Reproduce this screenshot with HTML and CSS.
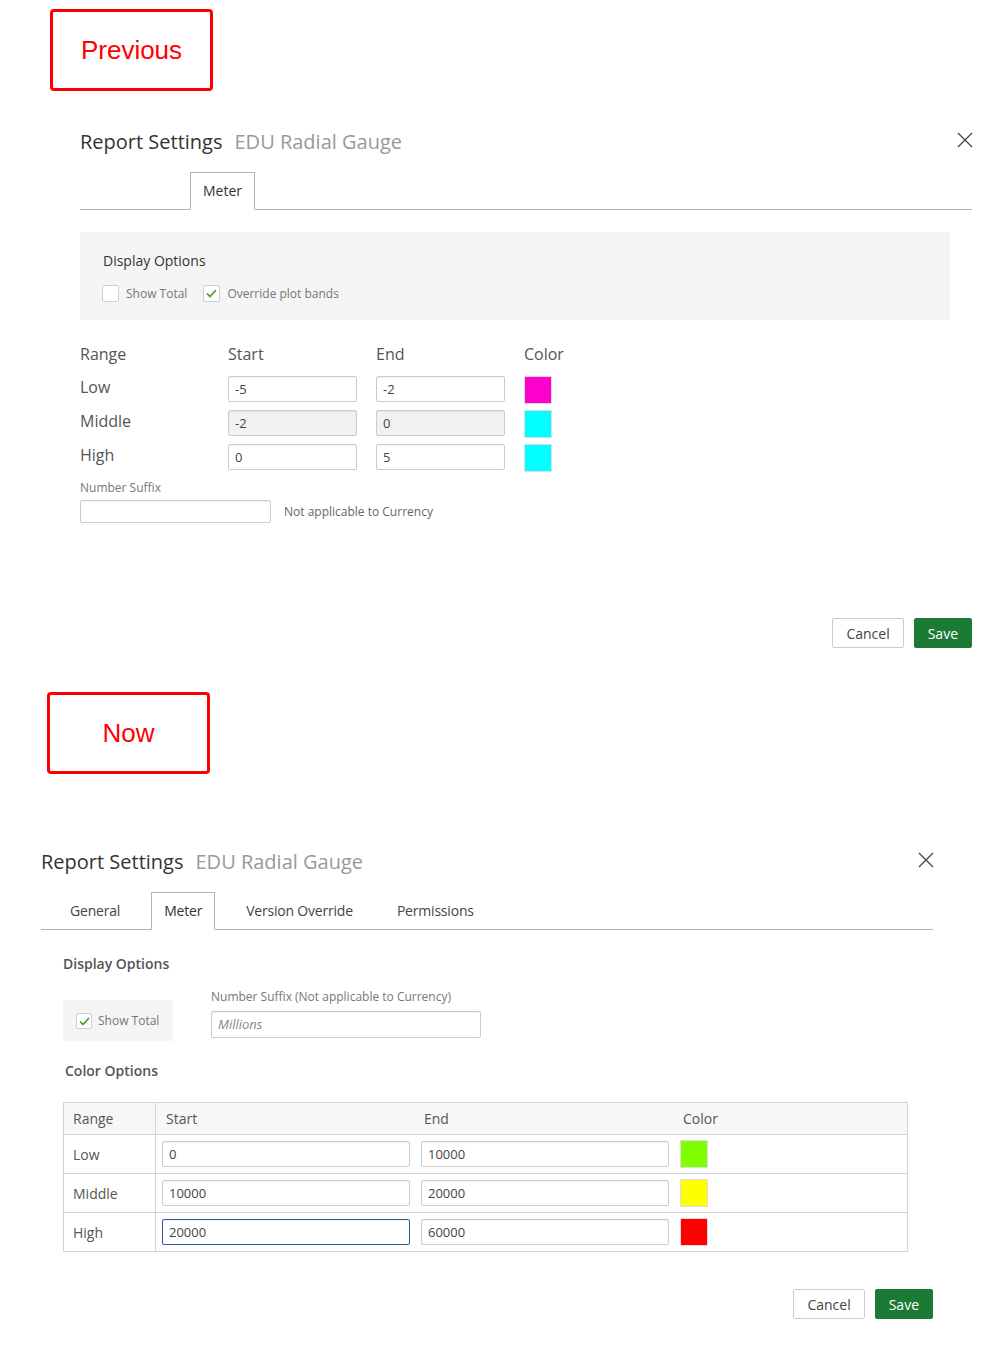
FILE: index.html
```html
<!DOCTYPE html>
<html lang="en">
<head>
<meta charset="utf-8">
<title>Report Settings</title>
<link rel="stylesheet" href="styles.css">
</head>
<body>
<section class="compare">
  <div class="tag tag-prev">Previous</div>
  <div class="dialog dialog-prev">
    <header class="dlg-head">
      <h2 class="title"><span class="title-main">Report Settings</span><span class="title-sub">EDU Radial Gauge</span></h2>
      <span class="close" aria-label="Close"><svg width="16" height="16" viewBox="0 0 16 16"><path d="M1 1L15 15M15 1L1 15" stroke="#444" stroke-width="1.3" fill="none"/></svg></span>
    </header>
    <nav class="tabs tabs-prev">
      <div class="tab active">Meter</div>
    </nav>
    <div class="panel">
      <div class="panel-title">Display Options</div>
      <div class="check-row">
        <label class="check"><span class="box"></span><span>Show Total</span></label>
        <label class="check"><span class="box"><svg width="15" height="15" viewBox="0 0 15 15"><path d="M3 7.5L6 10.5L12 4" stroke="#4f9a2b" stroke-width="1.7" fill="none"/></svg></span><span>Override plot bands</span></label>
      </div>
    </div>
    <div class="range-grid">
      <div class="rg-head">Range</div><div class="rg-head">Start</div><div class="rg-head">End</div><div class="rg-head">Color</div>
      <div class="rg-label">Low</div><div class="field">-5</div><div class="field">-2</div><div class="swatch sw-magenta"></div>
      <div class="rg-label">Middle</div><div class="field disabled">-2</div><div class="field disabled">0</div><div class="swatch sw-cyan"></div>
      <div class="rg-label">High</div><div class="field">0</div><div class="field">5</div><div class="swatch sw-cyan"></div>
    </div>
    <div class="small-label suffix-label">Number Suffix</div>
    <div class="suffix-row">
      <div class="field suffix-field"></div>
      <span class="small-note">Not applicable to Currency</span>
    </div>
    <div class="actions actions-prev">
      <button class="btn btn-cancel">Cancel</button>
      <button class="btn btn-save">Save</button>
    </div>
  </div>
</section>

<section class="compare">
  <div class="tag tag-now">Now</div>
  <div class="dialog dialog-now">
    <header class="dlg-head">
      <h2 class="title"><span class="title-main">Report Settings</span><span class="title-sub">EDU Radial Gauge</span></h2>
      <span class="close" aria-label="Close"><svg width="16" height="16" viewBox="0 0 16 16"><path d="M1 1L15 15M15 1L1 15" stroke="#444" stroke-width="1.3" fill="none"/></svg></span>
    </header>
    <nav class="tabs tabs-now">
      <div class="tab">General</div>
      <div class="tab active">Meter</div>
      <div class="tab">Version Override</div>
      <div class="tab">Permissions</div>
    </nav>
    <div class="body-now">
      <div class="section-title">Display Options</div>
      <div class="options-row">
        <div class="total-panel">
          <label class="check"><span class="box"><svg width="15" height="15" viewBox="0 0 15 15"><path d="M3 7.5L6 10.5L12 4" stroke="#4f9a2b" stroke-width="1.7" fill="none"/></svg></span><span>Show Total</span></label>
        </div>
        <div class="suffix-block">
          <div class="small-label">Number Suffix (Not applicable to Currency)</div>
          <div class="field suffix-now placeholder">Millions</div>
        </div>
      </div>
      <div class="section-title color-title">Color Options</div>
      <div class="ctable">
        <div class="ct-head ct-first">Range</div><div class="ct-head">Start</div><div class="ct-head">End</div><div class="ct-head">Color</div>
        <div class="ct-cell ct-first">Low</div><div class="ct-cell ct-in ct-in2"><div class="field">0</div></div><div class="ct-cell ct-in"><div class="field">10000</div></div><div class="ct-cell ct-sw"><div class="swatch sw-green"></div></div>
        <div class="ct-cell ct-first">Middle</div><div class="ct-cell ct-in ct-in2"><div class="field">10000</div></div><div class="ct-cell ct-in"><div class="field">20000</div></div><div class="ct-cell ct-sw"><div class="swatch sw-yellow"></div></div>
        <div class="ct-cell ct-first ct-last">High</div><div class="ct-cell ct-in ct-in2 ct-last"><div class="field focus">20000</div></div><div class="ct-cell ct-in ct-last"><div class="field">60000</div></div><div class="ct-cell ct-sw ct-last"><div class="swatch sw-red"></div></div>
      </div>
    </div>
    <div class="actions actions-now">
      <button class="btn btn-cancel">Cancel</button>
      <button class="btn btn-save">Save</button>
    </div>
  </div>
</section>
</body>
</html>
```

FILE: styles.css
```css
* { box-sizing: border-box; }
html, body { margin: 0; padding: 0; background: #fff; }
body {
  font-family: "Open Sans", "Liberation Sans", sans-serif;
  color: #333;
  width: 1006px;
  min-height: 1358px;
}

.tag {
  width: 163px;
  height: 82px;
  border: 3px solid #ff0000;
  border-radius: 4px;
  display: flex;
  align-items: center;
  justify-content: center;
  font-family: "Liberation Sans", Arial, sans-serif;
  font-size: 26px;
  color: #ff0000;
}
.tag-prev { margin: 9px 0 0 50px; }
.tag-now { margin: 44px 0 0 47px; }

.dialog { width: 892px; }
.dialog-prev { margin: 37px 0 0 80px; }
.dialog-now { margin: 74px 0 0 41px; }

.dlg-head {
  display: flex;
  justify-content: space-between;
  align-items: center;
  height: 28px;
}
.title {
  margin: 0;
  font-size: 20px;
  font-weight: 400;
  line-height: 28px;
  display: flex;
  gap: 12px;
}
.title-main { color: #333; }
.title-sub { color: #999; }
.close { display: block; width: 16px; height: 16px; margin-top: -4px; margin-right: -1px; }
.close svg { display: block; }

.tabs {
  display: flex;
  margin-top: 16px;
  border-bottom: 1px solid #a7b5c7;
}
.tabs-prev { padding-left: 110px; }
.tabs-now { padding-left: 16px; gap: 18px; }
.tab {
  font-size: 14px;
  line-height: 20px;
  padding: 8px 12px 8px;
  border: 1px solid transparent;
  margin-bottom: -1px;
  color: #444;
}
.tabs-now .tab { letter-spacing: -0.2px; }
.tab.active {
  border-color: #a7b5c7;
  border-bottom-color: #fff;
  background: #fff;
  color: #333;
}

.panel {
  margin-top: 22px;
  width: 870px;
  background: #f5f5f5;
  padding: 19px 22px 18px;
}
.panel-title { font-size: 14px; line-height: 20px; color: #333; padding-left: 1px; }
.check-row { display: flex; gap: 16px; margin-top: 14px; height: 17px; }
.check {
  display: flex;
  align-items: center;
  gap: 7px;
  font-size: 12px;
  color: #777;
  line-height: 17px;
}
.box {
  width: 17px;
  height: 17px;
  border: 1px solid #cfcfcf;
  border-radius: 2px;
  background: #fff;
  display: block;
}
.box svg { display: block; margin: 0; }

.range-grid {
  margin-top: 24px;
  display: grid;
  grid-template-columns: 148px 148px 148px 60px;
  grid-auto-rows: auto;
  row-gap: 6px;
  align-items: start;
}
.rg-head { font-size: 16px; line-height: 20px; color: #555; margin-bottom: 6px; }
.rg-label { font-size: 16px; line-height: 22px; color: #555; }

.field {
  width: 129px;
  height: 26px;
  border: 1px solid #cccccc;
  border-radius: 2px;
  background: #fff;
  box-shadow: inset 0 1px 1px rgba(0,0,0,0.06);
  font-size: 13px;
  line-height: 24px;
  padding: 0 6px;
  color: #444;
}
.field.disabled { background: #f1f1f1; }
.swatch {
  width: 28px;
  height: 28px;
  border: 1px solid #dddddd;
}
.sw-magenta { background: #ff00cc; }
.sw-cyan { background: #00ffff; }
.sw-green { background: #80ff00; }
.sw-yellow { background: #ffff00; }
.sw-red { background: #ff0000; }

.small-label { font-size: 12px; line-height: 16px; color: #777; }
.suffix-label { margin-top: 8px; }
.suffix-row { display: flex; align-items: center; margin-top: 4px; gap: 13px; }
.suffix-field { width: 191px; height: 23px; }
.small-note { font-size: 12px; color: #666; }

.actions { display: flex; justify-content: flex-end; gap: 10px; }
.actions-prev { margin-top: 95px; }
.actions-now { margin-top: 37px; }
.btn {
  font-family: "Open Sans", "Liberation Sans", sans-serif;
  font-size: 14px;
  height: 30px;
  padding: 0 13px;
  border-radius: 2px;
  cursor: pointer;
}
.btn-cancel { background: #fff; border: 1px solid #cccccc; color: #444; }
.btn-save { background: #1b7a33; border: 1px solid #1b7a33; color: #fff; padding: 0 13px; }

.body-now { padding-left: 22px; }
.section-title {
  margin-top: 24px;
  font-size: 14px;
  line-height: 20px;
  font-weight: 600;
  color: #555;
}
.options-row { display: flex; gap: 38px; margin-top: 15px; align-items: flex-start; }
.total-panel {
  margin-top: 11px;
  width: 110px;
  height: 41px;
  background: #f5f5f5;
  padding: 0 13px;
  display: flex;
  align-items: center;
}
.total-panel .check { gap: 6px; }
.total-panel .box { width: 16px; height: 16px; }
.suffix-now {
  margin-top: 6px;
  width: 270px;
  height: 27px;
  line-height: 25px;
  font-style: italic;
  color: #888;
  font-size: 13px;
}
.color-title { margin-top: 20px; margin-left: 2px; }

.ctable {
  margin-top: 21px;
  width: 845px;
  border: 1px solid #d4d4d4;
  display: grid;
  grid-template-columns: 92px 258px 259px 1fr;
}
.ct-head {
  height: 32px;
  background: #f7f7f7;
  border-bottom: 1px solid #d4d4d4;
  font-size: 14px;
  line-height: 31px;
  color: #555;
  padding-left: 10px;
}
.ct-first { border-right: 1px solid #d4d4d4; padding-left: 9px; }
.ct-cell {
  height: 39px;
  border-bottom: 1px solid #d4d4d4;
  font-size: 14px;
  color: #555;
  display: flex;
  align-items: center;
}
.ct-cell.ct-last { border-bottom: none; height: 38px; }
.ct-in { padding: 0 4px 1px 7px; }
.ct-in2 { padding-left: 6px; }
.ct-in .field { width: 100%; }
.ct-sw { padding-left: 7px; }
.field.focus { border-color: #2a5d9c; }
```
